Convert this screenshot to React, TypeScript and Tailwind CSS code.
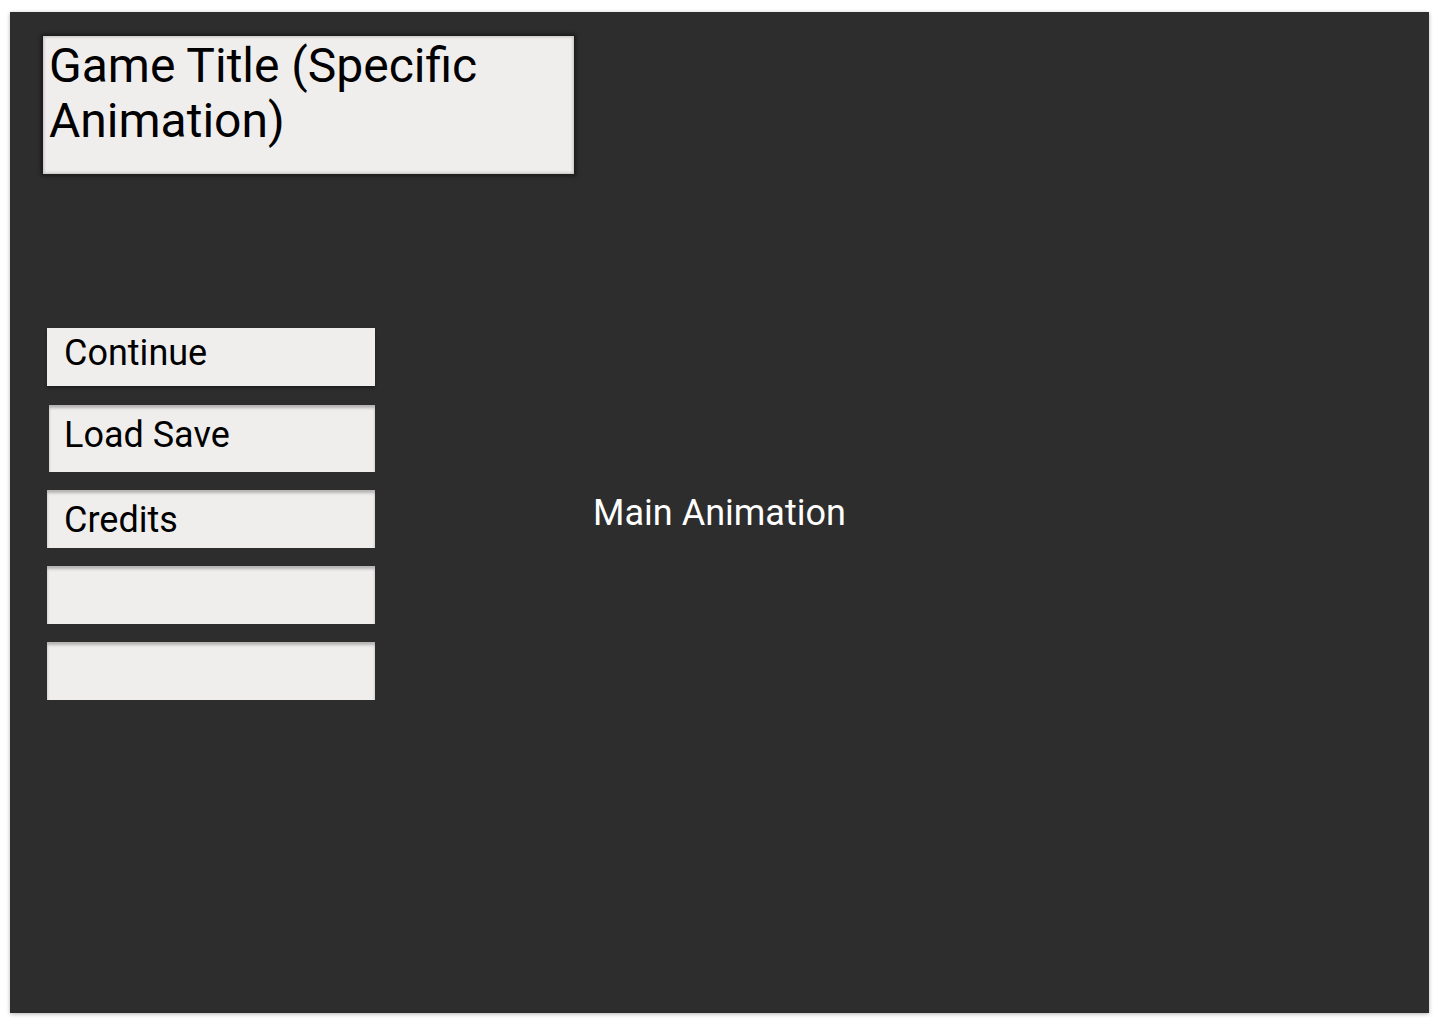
const menu = [
  { label: 'Continue', cls: 'ml-0 pl-[17px] w-[328px] h-[58px] shadow-[0_2px_3px_rgba(0,0,0,0.35)]' },
  { label: 'Load Save', cls: 'ml-[2px] pl-[15px] w-[326px] h-[67px] mt-[19px] pt-[5px] shadow-[inset_0_3px_3px_rgba(0,0,0,0.25)]' },
  { label: 'Credits', cls: 'ml-0 pl-[17px] w-[328px] h-[58px] mt-[18px] pt-[5px] shadow-[inset_0_3px_3px_rgba(0,0,0,0.25)]' },
  { label: '', cls: 'ml-0 w-[328px] h-[58px] mt-[18px] shadow-[inset_0_3px_3px_rgba(0,0,0,0.25)]' },
  { label: '', cls: 'ml-0 w-[328px] h-[58px] mt-[18px] shadow-[inset_0_3px_3px_rgba(0,0,0,0.25)]' },
]

export default function App() {
  return (
    <div className="min-h-[1024px] w-[1440px] bg-white pl-[10px] pt-[12px] font-['Roboto',sans-serif]">
      <div className="grid h-[1001px] w-[1419px] bg-[#2d2d2d] shadow-[0_1px_4px_rgba(0,0,0,0.3)]">
        {/* menu layer */}
        <div className="col-start-1 row-start-1 flex flex-col pl-[33px] pt-[24px]">
          <div className="h-[138px] w-[531px] bg-[#f0eeed] px-[6px] pt-[2px] text-[48px] leading-[55px] text-black shadow-[0_0_4px_2px_rgba(0,0,0,0.45),inset_0_0_3px_1px_rgba(0,0,0,0.2)]">
            Game Title (Specific Animation)
          </div>

          <div className="ml-[4px] mt-[154px] flex flex-col">
            {menu.map((m, i) => (
              <div
                key={i}
                className={`bg-[#f0eeed] text-[36px] leading-[50px] text-black ${m.cls}`}
              >
                {m.label}
              </div>
            ))}
          </div>
        </div>

        {/* animation area */}
        <div className="col-start-1 row-start-1 flex items-center justify-center">
          <span className="text-[36px] text-white">Main Animation</span>
        </div>
      </div>
    </div>
  )
}
